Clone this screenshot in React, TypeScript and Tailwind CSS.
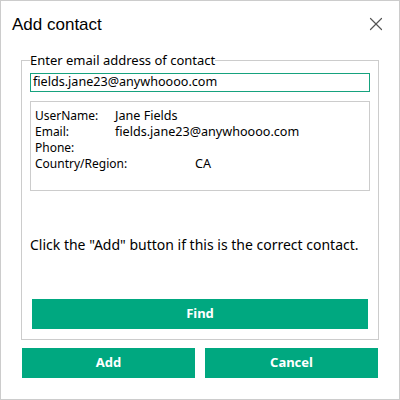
import { X } from "lucide-react";

const rows = [
  { label: "UserName:", value: "Jane Fields", indent: "pl-[80px]" },
  { label: "Email:", value: "fields.jane23@anywhoooo.com", indent: "pl-[80px]" },
  { label: "Phone:", value: "", indent: "pl-[80px]" },
  { label: "Country/Region:", value: "CA", indent: "pl-[160px]" },
];

export default function App() {
  return (
    <div className="flex h-[400px] w-[400px] flex-col border border-[#cccccc] bg-white font-['Noto_Sans',sans-serif] text-black">
      <div className="flex h-[46px] items-center justify-between pl-[11px] pr-[12px]">
        <h1 className="font-['Liberation_Sans',sans-serif] text-[17px] leading-none">Add contact</h1>
        <X className="h-[22px] w-[22px] text-[#555]" strokeWidth={1.3} />
      </div>

      <fieldset className="mx-[20px] mt-[5px] border border-[#cccccc] px-[8px] pb-[10px]">
        <legend className="-mt-[2px] text-[13px] leading-[16px]">Enter email address of contact</legend>
        <div className="mt-[5px] h-[19px] bg-[#16a27e] p-px">
          <div className="flex h-full items-center bg-white px-[2px] text-[12.6px] leading-none">
            fields.jane23@anywhoooo.com
          </div>
        </div>
        <div className="mt-[9px] h-[90px] border border-[#cccccc] px-[4px] pt-[6px] text-[12px] leading-[16px]">
          {rows.map((r) => (
            <div key={r.label} className="relative h-[16px]">
              <span className="absolute left-0">{r.label}</span>
              <span className={`absolute left-0 text-[12.6px] ${r.indent}`}>{r.value}</span>
            </div>
          ))}
        </div>
        <p className="mt-[45px] text-[14px] leading-[18px]">
          Click the "Add" button if this is the correct contact.
        </p>
        <button className="mx-[2px] mt-[45px] block h-[30px] w-[calc(100%-4px)] bg-[#00a880] text-[13px] font-bold text-white">
          Find
        </button>
      </fieldset>

      <div className="mx-[21px] mt-[8px] flex gap-[10px]">
        <button className="h-[30px] flex-1 bg-[#00a880] text-[13px] font-bold text-white">Add</button>
        <button className="h-[30px] flex-1 bg-[#00a880] text-[13px] font-bold text-white">Cancel</button>
      </div>
    </div>
  );
}
